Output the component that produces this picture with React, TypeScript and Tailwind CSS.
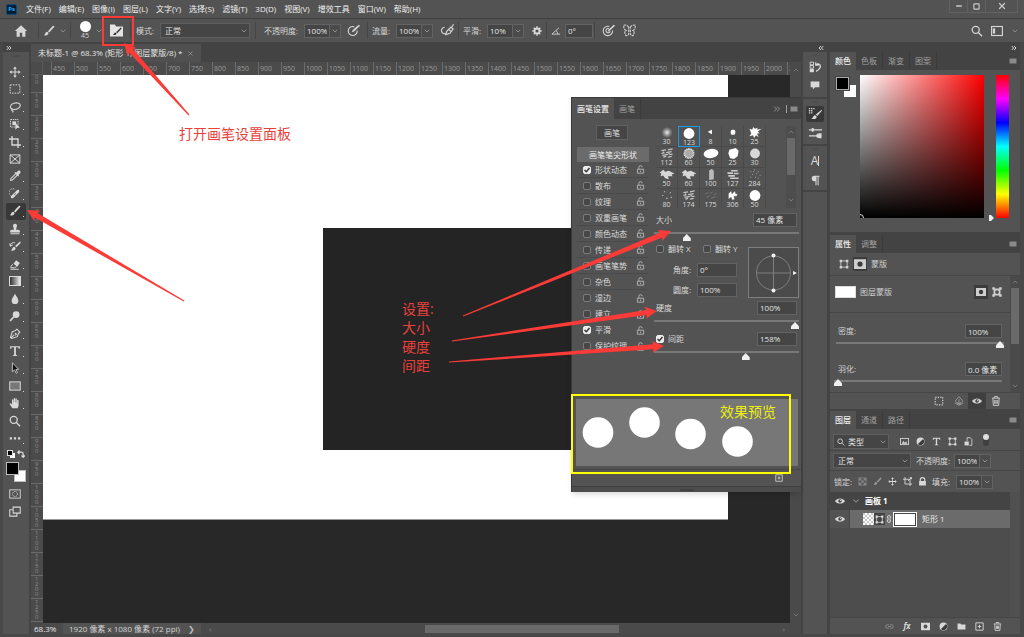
import React from 'react';
import { ChevronDown, ChevronUp, ChevronsLeft, ChevronsRight, Minus, Plus, Square, X } from 'lucide-react';

const RED = '#fb3b37';

// 16x16 drawings, painted in currentColor
const glyphs: Record<string, React.ReactNode> = {
  home: <path d="M8 1.500 1 8h2v6.500h3.600V10h2.800v4.500H13V8h2z" fill="currentColor" />,
  brush: <path d="M14.800 1.200c-.7-.6-1.500-.2-2.200.5L6.600 8.200l1.800 1.700 6-6.500c.6-.7 1-1.600.4-2.200zM5.700 9c-1.500 0-2.400 1-2.700 2.300-.2 1-.9 1.700-1.900 2 2.300 1.400 6.200.9 6.400-2.500z" fill="currentColor" />,
  move: <path d="M8 .5 5.500 3.500h1.800v3.800H3.500V5.500L.5 8l3 2.500V8.700h3.800v3.800H5.500L8 15.500l2.500-3H8.700V8.700h3.800v1.800l3-2.500-3-2.500v1.800H8.700V3.500h1.800z" fill="currentColor" />,
  marquee: <rect x="1.500" y="2.500" width="13" height="11" stroke="currentColor" strokeWidth="1.300" strokeDasharray="2.200 1.400" />,
  lasso: <path d="M4.500 11C.5 9.500 1 4.500 6.500 3s9 .5 8.500 3.500-5.500 5.500-9.500 4.500c-2-.5-2.500 1.500-1 2s1.500 1.500 0 2" stroke="currentColor" strokeWidth="1.400" />,
  objectSelect: (
    <>
      <rect x="2" y="2" width="10" height="10" stroke="currentColor" strokeWidth="1.200" strokeDasharray="2 1" />
      <rect x="4.500" y="4.500" width="5" height="5" fill="currentColor" />
      <path d="M8.500 6.500v9l2.300-2.200 3.700-.3z" fill="currentColor" />
    </>
  ),
  crop: <path d="M4 0v12h12M0 4h12v12" stroke="currentColor" strokeWidth="1.800" />,
  frame: <path d="M1.500 2.500h13v11h-13zM1.500 2.500l13 11M14.500 2.500l-13 11" stroke="currentColor" strokeWidth="1.300" />,
  eyedropper: <path d="m14.800 1.200c-1-1-2.300-.7-3 0L9.500 3.500l-1-1-1.200 1.200 1 1L2 11l-.8 3.800L5 14l6.300-6.300 1 1 1.200-1.200-1-1 2.300-2.300c.7-.7 1-2 0-3zM4.300 12.500l-1.500.5.500-1.500 5.900-5.900 1 1z" fill="currentColor" />,
  heal: (
    <>
      <path d="M2 10a5 5 0 0 1 6-8" stroke="currentColor" strokeWidth="1.200" strokeDasharray="1.500 1" />
      <path d="m10.200 3.200-7 7c-1 1-1 2.200-.2 3s2.200.8 3-.2l7-7c1-1 1-2.200.2-3s-2-.8-3 .2z" fill="currentColor" />
      <path d="m7 8 1.800 1.800M8.500 7l1 1" stroke="#444" strokeWidth="1" />
    </>
  ),
  stamp: <path d="M8 1a2.600 2.600 0 0 0-2.300 4L6.800 9H3.500a2 2 0 0 0-2 2v1.500h13V11a2 2 0 0 0-2-2H9.200l1.100-4A2.600 2.600 0 0 0 8 1zM2 13.500h12V15H2z" fill="currentColor" />,
  historyBrush: (
    <>
      <path d="M15 1.500 8 8l2 1.800L15.500 4zM7.200 9c-2 0-2.500 1.500-3 3-.2.800-1 1.500-2 1.700 2.500 1.200 6.300.8 6.700-2.900z" fill="currentColor" />
      <path d="M2 8a4 4 0 0 1 6-4M1 4.500l.8 3.800L5 6.500" stroke="currentColor" strokeWidth="1.300" />
    </>
  ),
  eraser: (
    <>
      <path d="m9.500 3 5 3.500-3.500 5-5-3.700z" fill="currentColor" />
      <path d="M5.300 8.500 2.500 11v2h5l2.800-1.800M2 15h11" stroke="currentColor" strokeWidth="1.300" />
    </>
  ),
  blur: <path d="M8 1C6.500 4 3.500 7 3.500 10.200a4.500 4.500 0 0 0 9 0C12.500 7 9.500 4 8 1z" fill="currentColor" />,
  dodge: (
    <>
      <circle cx="9.500" cy="6" r="4.500" fill="currentColor" />
      <path d="M6.500 9 1.500 14.500" stroke="currentColor" strokeWidth="2.200" />
    </>
  ),
  pen: <path d="M10.500 1.500 14.500 5.500 12.500 7.500 11 11.500 3.500 14 2 12.500 4.500 5l4-1.500zM2.500 13.500 7 9M8 7.500a1 1 0 1 1 0 1.500" stroke="currentColor" strokeWidth="1.400" />,
  type: <path d="M1.500 1.500h13V5H13c-.2-1.500-.7-2-2-2H9.200v9.500c0 .8.500 1 1.800 1.100v.9H5v-.9c1.300-.1 1.800-.3 1.800-1.100V3H5c-1.300 0-1.800.5-2 2H1.500z" fill="currentColor" />,
  pathSelect: <path d="M4.500 1v12l3-2.500L9.500 15l1.800-1-2-4 3.500-.3z" fill="#111" stroke="currentColor" strokeWidth="1.100" />,
  rect: <rect x="1" y="2.500" width="14" height="11" fill="#777" stroke="currentColor" strokeWidth="1.300" />,
  hand: <path d="M4.500 15 1 9.500c-.5-1 .6-1.800 1.500-1L4 10V4c0-1.200 1.700-1.200 1.800 0V7h.5V2.200c0-1.300 1.800-1.300 1.800 0V7h.5V2.700c0-1.200 1.800-1.200 1.800 0V7.500h.5V4.700c0-1.200 1.800-1.200 1.900 0v6c0 2-.8 3-1.300 4.300z" fill="currentColor" />,
  zoom: <path d="M11 6.500a4.700 4.700 0 1 1-9.400 0 4.700 4.700 0 0 1 9.400 0zM9.800 10l5 5" stroke="currentColor" strokeWidth="1.700" />,
  dots: <path d="M1 7h3v3H1zM6.500 7h3v3h-3zM12 7h3v3h-3z" fill="currentColor" />,
  quickMask: (
    <>
      <rect x="1" y="2.500" width="14" height="11" stroke="currentColor" strokeWidth="1.200" />
      <circle cx="8" cy="8" r="3.300" stroke="currentColor" strokeWidth="1.200" strokeDasharray="1.500 .8" />
    </>
  ),
  screenMode: <path d="M5.500 1.500h9.500v8H5.500zM5 5H1v8.500h9.500V10" stroke="currentColor" strokeWidth="1.400" />,
  brushPanel: (
    <>
      <path d="M0 .5h6L7.500 3H16v12.500H0z" fill="#e4e4e4" />
      <path d="M13.500 4 7.500 10l1.500 1.500 5.300-6zM6.700 10.500c-1.800 0-1.500 2-3 2.600 1.700.8 4.200.3 4.500-1.200z" fill="#3a3a3a" />
    </>
  ),
  pressure: (
    <>
      <path d="M9 3.500A5.500 5.500 0 1 0 12.500 8" stroke="currentColor" strokeWidth="1.400" />
      <path d="m6 10 1-2.500L14.500.8 16 2.300 8.700 9.200z" fill="currentColor" />
    </>
  ),
  airbrush: <path d="M4.500 4a4 4 0 1 0 2 7.500M6 13l1-4 5-5 3 2-4 5.500zM15.500.5 13 4M10 7l3 3" stroke="currentColor" strokeWidth="1.400" />,
  gear: (
    <>
      <circle cx="8" cy="8" r="4" stroke="currentColor" strokeWidth="3" />
      <path d="M8 .5v3M8 12.500v3M.5 8h3M12.500 8h3M2.700 2.700l2 2M11.300 11.300l2 2M2.700 13.300l2-2M11.300 4.700l2-2" stroke="currentColor" strokeWidth="2.200" />
    </>
  ),
  angle: <path d="M12.500 3 1.500 13h13M8 7.500c1.800 1.300 2.500 3 2.500 5.500" stroke="currentColor" strokeWidth="1.400" />,
  target: (
    <>
      <path d="M9 3A5.800 5.800 0 1 0 13 8M9 6a2.600 2.600 0 1 0 1 3" stroke="currentColor" strokeWidth="1.300" />
      <path d="m7 9.500.8-2L14.500.8 16 2.300 9.200 8.700z" fill="currentColor" />
    </>
  ),
  butterfly: <path d="M7 4C5.500 1.500 3 1 .8 1.500c0 3 .7 5.500 3 6.500-2 1-2 4.500.2 6.500 2 0 3-1.500 3-3zM9 4c1.500-2.500 4-3 6.200-2.500 0 3-.7 5.500-3 6.500 2 1 2 4.500-.2 6.500-2 0-3-1.500-3-3z" stroke="currentColor" strokeWidth="1.300" strokeDasharray="3 1" />,
  workspace: (
    <>
      <rect x=".8" y="2" width="14.400" height="12" stroke="currentColor" strokeWidth="1.500" />
      <path d="M2.500 4.500h3v7h-3z" fill="currentColor" />
    </>
  ),
  history: (
    <>
      <path d="M1.500 1.500H6V5H1.500zM1.500 6H6v3.500H1.500z" stroke="currentColor" strokeWidth="1.200" />
      <path d="M1 10.500h5.500v4.500H1z" fill="currentColor" />
      <path d="M9 1.500v4h4M9.500 5C13 2 17 6 14 10c-1 1.500-2.500 2.500-4.500 4" stroke="currentColor" strokeWidth="1.700" />
    </>
  ),
  comment: <path d="M1 2.500h14v9H8L4.500 15v-3.500H1z" fill="currentColor" />,
  brushSettings: (
    <>
      <path d="M1 1h1.500v1.500H1zM3.500 1H5v1.500H3.500zM6 1h1.500v1.500H6zM1 3.500h1.500V5H1zM3.500 3.500H5V5H3.500zM1 6h1.500v1.500H1zM3.500 6H5v1.500H3.500z" fill="currentColor" />
      <path d="M15.500 3 9 8.500l1.700 1.700L16 4zM8.300 9.500c-2.500 0-2 3-4.300 3.500 2 1.500 6 1 6-2z" fill="currentColor" />
    </>
  ),
  brushes: <path d="M0 4h3c0-1.500 2-2 3-1v1h10v1.500H6v1c-1 1-3 .5-3-1H0zM0 11.500h9C9 10 11 9 13 9l2.500 0v6H13c-2 0-4-.7-4-2H0z" fill="currentColor" />,
  paragraph: <path d="M6.500 1H14v1.500h-1.500V15H11V2.500H9.500V15H8V9H6.500a4 4 0 0 1 0-8z" fill="currentColor" />,
  transform: (
    <>
      <path d="M3 3h10v10H3z" stroke="currentColor" strokeWidth="1.400" />
      <path d="M1 1h4v4H1zM11 1h4v4h-4zM1 11h4v4H1zM11 11h4v4h-4z" fill="currentColor" />
    </>
  ),
  vectorMask: (
    <>
      <path fillRule="evenodd" d="M2.500 2.500h11v11h-11zM8 5a3 3 0 1 0 0 6 3 3 0 0 0 0-6z" fill="currentColor" />
      <path d="M.5.5h4v4h-4zM11.500.5h4v4h-4zM.5 11.500h4v4h-4zM11.500 11.500h4v4h-4z" fill="currentColor" />
    </>
  ),
  mask: <path fillRule="evenodd" d="M0 1.500h16v13H0zM8 4.500a3.500 3.500 0 1 0 0 7 3.500 3.500 0 0 0 0-7z" fill="currentColor" />,
  dotted: <rect x="2" y="2" width="12" height="12" stroke="currentColor" strokeWidth="2" strokeDasharray="2 2" />,
  apply: <path d="M8 1 2 8l6 6 6-6zM8 5v8M5.500 10 8 13l2.500-3M1 11l7 4 7-4" stroke="currentColor" strokeWidth="1.500" />,
  eye: (
    <>
      <path d="M0 8c3.500-5.500 12.500-5.500 16 0-3.500 5.500-12.500 5.500-16 0z" fill="currentColor" />
      <circle cx="8" cy="8" r="2.800" fill="#444" />
      <circle cx="8.800" cy="7.300" r="1" fill="currentColor" />
    </>
  ),
  trash: <path d="M1.500 3.500h13M5.500 3V1h5v2M3 4l.8 11h8.400L13 4M6 6.500v6M8 6.500v6M10 6.500v6" stroke="currentColor" strokeWidth="1.500" />,
  image: (
    <>
      <rect x="1" y="2.500" width="14" height="11" stroke="currentColor" strokeWidth="1.500" />
      <path d="m3 12 3-5 2.500 3L11 8l2 4z" fill="currentColor" />
    </>
  ),
  adjust: (
    <>
      <circle cx="8" cy="8" r="7" fill="currentColor" />
      <path d="M12.500 3.500a6.300 6.300 0 0 1-9 9z" fill="#3c3c3c" />
    </>
  ),
  smart: (
    <>
      <path d="M5.500 7V1.200H11L14 4.200v10.500H9.500" stroke="currentColor" strokeWidth="1.500" />
      <path d="M1 8h7.500v7H1z" fill="currentColor" />
    </>
  ),
  checker: (
    <>
      <rect x="1.500" y="1.500" width="13" height="13" stroke="currentColor" strokeWidth="1.300" />
      <path d="M2 2h4v4H2zM10 2h4v4h-4zM6 6h4v4H6zM2 10h4v4H2zM10 10h4v4h-4z" fill="currentColor" />
    </>
  ),
  artboard: <path d="M3.500 0v12.500H16M0 4h12.500v12M9 7l6-6M12 1h3v3" stroke="currentColor" strokeWidth="1.600" />,
  lockClosed: <path d="M3 7V5a5 5 0 0 1 10 0v2h1v8H2V7zM5 7h6V5a3 3 0 0 0-6 0z" fill="currentColor" />,
  lockOpen: <path d="M2.500 7.500h11v7h-11zM5 7V4.500a3 3 0 0 1 6-.5M8 10v2.500" stroke="currentColor" strokeWidth="1.500" />,
  link: <path d="M7 5H4a3 3 0 0 0 0 6h3M9 5h3a3 3 0 0 1 0 6H9M5 8h6" stroke="currentColor" strokeWidth="1.600" />,
  chain: <path d="M5 7V4a3 3 0 0 1 6 0v3M5 9v3a3 3 0 0 0 6 0V9M8 5v6" stroke="currentColor" strokeWidth="1.800" />,
  folder: <path d="M1 2.500h5l1.500 2H15v9H1z" fill="currentColor" />,
  newItem: <path d="M1.500 1.500h13v13h-13zM8 5v6M5 8h6" stroke="currentColor" strokeWidth="1.600" />,
  menu: <path d="M1 3h14v10H1z" fill="#8b8b8b" />,
  grip: <path d="M0 7h16v2H0z" fill="#474747" />,
};

const Icon: React.FC<{ name: string; className?: string }> = ({ name, className = 'size-3' }) => (
  <svg viewBox="0 0 16 16" fill="none" className={`shrink-0 ${className}`} aria-hidden="true">{glyphs[name]}</svg>
);

const IconButton: React.FC<{ icon: string; label: string; className?: string; size?: string }> = ({ icon, label, className = '', size }) => (
  <button aria-label={label} className={`flex items-center justify-center shrink-0 ${className}`}>
    <Icon name={icon} className={size} />
  </button>
);

const TextField: React.FC<{ id: string; value: string; label?: string; className?: string }> = ({ id, value, label, className = '' }) => (
  <input id={id} aria-label={label} defaultValue={value} className={`h-3.5 px-0.5 bg-[#454545] border border-[#626262] text-[#e4e4e4] outline-none min-w-0 shrink-0 ${className}`} />
);

const DropField: React.FC<{ id: string; label: string; value: string; labelClass?: string }> = ({ id, label, value, labelClass = 'w-5' }) => (
  <div className="flex items-center gap-1 shrink-0">
    <label htmlFor={id} className={`whitespace-nowrap ${labelClass}`}>{label}</label>
    <div className="flex">
      <TextField id={id} value={value} className="w-[26px]" />
      <button aria-label={label} className="w-[11px] h-3.5 border border-l-0 border-[#626262] bg-[#4b4b4b] flex items-center justify-center">
        <ChevronDown className="size-2 text-[#b0b0b0]" />
      </button>
    </div>
  </div>
);

const Select: React.FC<{ id: string; label: string; value: string; className?: string; pad?: string; children?: React.ReactNode }> = ({ id, label, value, className = '', pad = 'pl-1', children }) => (
  <div className={`relative flex items-center shrink-0 ${className}`}>
    <select id={id} aria-label={label} className={`appearance-none w-full h-[15px] bg-[#454545] border border-[#5f5f5f] text-[#e4e4e4] outline-none ${pad}`}>
      <option>{value}</option>
    </select>
    {children}
    <ChevronDown className="absolute right-0.5 size-2 text-[#b0b0b0] pointer-events-none" />
  </div>
);

const Slider: React.FC<{ label: string; value: number; low?: boolean; className?: string }> = ({ label, value, low, className = '' }) => (
  <input
    type="range"
    aria-label={label}
    defaultValue={value}
    className={`block appearance-none bg-transparent h-2 [&::-webkit-slider-runnable-track]:h-0.5 [&::-webkit-slider-runnable-track]:bg-[#787878] [&::-webkit-slider-thumb]:appearance-none [&::-webkit-slider-thumb]:w-2 [&::-webkit-slider-thumb]:h-[7px] [&::-webkit-slider-thumb]:bg-[#f0f0f0] [&::-webkit-slider-thumb]:[clip-path:polygon(50%_0,100%_60%,100%_100%,0_100%,0_60%)] ${low ? '[&::-webkit-slider-thumb]:mt-0.5' : '[&::-webkit-slider-thumb]:-mt-px'} ${className}`}
  />
);

const Check: React.FC<{ id: string; checked?: boolean }> = ({ id, checked }) => (
  <span className="relative size-2 shrink-0 flex">
    <input id={id} type="checkbox" defaultChecked={checked} className="peer appearance-none size-2 rounded-xs border border-[#7b7b7b] bg-[#474747] checked:bg-[#ececec] checked:border-[#ececec]" />
    <svg viewBox="0 0 8 8" className="absolute inset-0 size-2 hidden peer-checked:block pointer-events-none">
      <path d="M1.500 4 3.300 5.800 6.500 2" fill="none" stroke="#333" strokeWidth="1.400" />
    </svg>
  </span>
);

const TabBar: React.FC<{ tabs: string[]; h?: string }> = ({ tabs, h = 'h-[18px]' }) => (
  <div role="tablist" className={`flex bg-[#434343] shrink-0 ${h}`}>
    {tabs.map((t, i) => (
      <button key={t} role="tab" aria-selected={i === 0} className={i === 0 ? 'px-[5px] bg-[#535353] text-[#f0f0f0] font-medium' : 'px-[5px] text-[#a0a0a0] border-r border-[#3b3b3b]'}>{t}</button>
    ))}
    <span className="ml-auto mr-[3px] flex items-center"><Icon name="menu" className="size-2" /></span>
  </div>
);

const menus = ['文件(F)', '编辑(E)', '图像(I)', '图层(L)', '文字(Y)', '选择(S)', '滤镜(T)', '3D(D)', '视图(V)', '增效工具', '窗口(W)', '帮助(H)'];

const MenuBar: React.FC = () => (
  <header className="h-[19px] flex items-center pl-1.5 pr-1.5 border-b border-[#3f3f3f] text-[#f0f0f0]">
    <div className="size-[11px] rounded-xs bg-[#001e36] border border-[#0b4a75] text-[#31a8ff] text-[6px] font-bold leading-none flex items-center justify-center">Ps</div>
    <nav className="flex gap-2 ml-[9px]">
      {menus.map(m => <button key={m} className="whitespace-nowrap">{m}</button>)}
    </nav>
    <div className="ml-auto self-start flex h-[13px] border border-t-0 border-[#626262] text-[#c8c8c8]">
      <button aria-label="最小化" className="w-[18px] flex items-center justify-center border-r border-[#626262]"><Minus className="size-2" strokeWidth={4} /></button>
      <button aria-label="最大化" className="w-[18px] flex items-center justify-center border-r border-[#626262]"><Square className="size-[7px]" strokeWidth={4} /></button>
      <button aria-label="关闭" className="w-[31px] flex items-center justify-center"><X className="size-2.5" strokeWidth={3} /></button>
    </div>
  </header>
);

const group = 'h-[17px] flex items-center shrink-0 border-r border-[#454545]';

const OptionsBar: React.FC = () => (
  <div className="h-6 flex items-center px-[3px] border-b border-[#434343] text-[#d6d6d6]">
    <div className={`${group} w-9 justify-center`}><IconButton icon="home" label="主页" size="size-3.5" /></div>
    <div className={`${group} w-8 justify-center gap-1`}>
      <IconButton icon="brush" label="画笔工具" />
      <ChevronDown className="size-2 text-[#a8a8a8]" />
    </div>
    <div className={`${group} w-[60px] pl-2`}>
      <div className="w-3 flex flex-col items-center">
        <span className="size-[11px] rounded-full bg-white" />
        <span className="text-[7px] leading-2">45</span>
      </div>
      <ChevronDown className="size-2 ml-1 text-[#a8a8a8]" />
      <IconButton icon="brushPanel" label="画笔设置" className="ml-[7px]" size="size-[13px]" />
    </div>
    <div className={`${group} w-[125px] pl-[5px] gap-1`}>
      <label htmlFor="mode" className="w-5 whitespace-nowrap">模式:</label>
      <Select id="mode" label="模式" value="正常" className="w-[90px]" />
    </div>
    <div className={`${group} w-28 pl-2 gap-1.5`}>
      <DropField id="opacity" label="不透明度:" value="100%" labelClass="w-9" />
      <IconButton icon="pressure" label="不透明度压力" size="size-[13px]" />
    </div>
    <div className={`${group} w-[91px] pl-1 gap-2`}>
      <DropField id="flow" label="流量:" value="100%" />
      <IconButton icon="airbrush" label="喷枪" size="size-[13px]" />
    </div>
    <div className={`${group} w-[88px] pl-1 gap-2`}>
      <DropField id="smooth" label="平滑:" value="10%" />
      <IconButton icon="gear" label="平滑选项" size="size-2.5" />
    </div>
    <div className={`${group} w-12 pl-1 gap-1`}>
      <label htmlFor="angle"><Icon name="angle" className="size-2.5" /></label>
      <TextField id="angle" label="角度" value="0°" className="w-7" />
    </div>
    <IconButton icon="target" label="大小压力" className="ml-[7px]" size="size-[13px]" />
    <IconButton icon="butterfly" label="对称" className="ml-2" size="size-[13px]" />
    <div className="ml-auto flex items-center gap-2 mr-0.5">
      <IconButton icon="zoom" label="搜索" size="size-3" />
      <IconButton icon="workspace" label="工作区" />
      <ChevronDown className="size-2 text-[#a8a8a8]" />
    </div>
  </div>
);

const tools = [
  ['move', '移动'], ['marquee', '选框'], ['lasso', '套索'], ['objectSelect', '对象选择'], ['crop', '裁剪'], ['frame', '图框'],
  ['eyedropper', '吸管'], ['heal', '修复画笔'], ['brush', '画笔'], ['stamp', '图章'], ['historyBrush', '历史记录画笔'], ['eraser', '橡皮擦'],
  ['gradient', '渐变'], ['blur', '模糊'], ['dodge', '减淡'], ['pen', '钢笔'], ['type', '文字'], ['pathSelect', '路径选择'],
  ['rect', '矩形'], ['hand', '抓手'], ['zoom', '缩放'], ['dots', '更多'],
];

const Toolbar: React.FC = () => (
  <aside className="w-[26px] shrink-0 flex flex-col bg-[#535353] text-[#d9d9d9]">
    <div className="h-[9px] bg-[#434343] flex items-center"><ChevronsRight className="size-2 ml-0.5" strokeWidth={3} /></div>
    <div className="h-[11px] flex justify-center"><Icon name="grip" className="w-4 h-2" /></div>
    <div className="grid auto-rows-fr h-96 px-[3px]">
      {tools.map(([icon, label]) => (
        <button key={icon} aria-label={label} className={`relative flex items-center pl-[3px] ${icon === 'brush' ? 'bg-[#383838] rounded-xs' : ''}`}>
          {icon === 'gradient'
            ? <span className="w-3 h-2.5 border border-[#d9d9d9] bg-linear-to-r from-[#333] to-[#eee]" />
            : <Icon name={icon} className="size-3" />}
          {icon !== 'frame' && icon !== 'zoom' && <span className="absolute right-0.5 bottom-[3px] size-px bg-[#d9d9d9]" />}
        </button>
      ))}
    </div>
    <div className="flex items-center justify-between px-1 h-3 mt-px">
      <svg viewBox="0 0 8 8" className="size-2"><rect x="3" y="3" width="5" height="5" fill="#fff" /><rect x=".5" y=".5" width="5" height="5" fill="#000" stroke="#ddd" /></svg>
      <svg viewBox="0 0 8 8" className="size-2" fill="none" stroke="#ddd" strokeWidth="1.200"><path d="M2.500.5.8 2.200 2.500 4M1 2.200h3.200q2 0 2 2V7M4.500 5.500 6.200 7.300 7.800 5.500" /></svg>
    </div>
    <div className="grid ml-[3px] mt-0.5 size-5">
      <button aria-label="背景色" className="col-start-1 row-start-1 size-3 bg-white border border-[#bbb] justify-self-end self-end" />
      <button aria-label="前景色" className="col-start-1 row-start-1 size-[13px] bg-black border border-[#bbb]" />
    </div>
    <div className="flex flex-col gap-1.5 items-start pl-1.5 mt-1.5">
      <IconButton icon="quickMask" label="快速蒙版" />
      <IconButton icon="screenMode" label="屏幕模式" />
    </div>
  </aside>
);

const hTicks = Array.from({ length: 33 }, (_, i) => 450 + i * 50);
const vTicks = Array.from({ length: 23 }, (_, i) => 150 + i * 50);

const DocumentArea: React.FC = () => (
  <main className="flex-1 min-w-0 flex flex-col ml-0.5">
    <div className="h-[19px] bg-[#434343] flex pt-px shrink-0">
      <button className="flex items-center bg-[#505050] text-[#e2e2e2] pl-[7px] pr-[7px] gap-1 whitespace-nowrap">
        未标题-1 @ 68.3% (矩形 1, 图层蒙版/8) * <X className="size-[7px] text-[#aaa]" />
      </button>
    </div>
    <div className="flex-1 min-h-0 flex">
      <div className="flex-1 min-w-0 flex flex-col">
        <div className="h-[13px] shrink-0 flex bg-[#4b4b4b] text-[#999] text-[7px] overflow-hidden">
          <div className="w-3 shrink-0 border-r border-b border-[#5a5a5a]" />
          <div className="w-2 shrink-0" />
          {hTicks.map(n => (
            <span key={n} className="w-[23px] shrink-0 border-l border-[#6a6a6a] pl-px leading-[13px]">{n}</span>
          ))}
        </div>
        <div className="flex-1 min-h-0 flex">
          <div className="w-3 shrink-0 bg-[#4b4b4b] text-[#8c8c8c] text-[6px] leading-[5px] overflow-hidden">
            <div className="h-[17px]"><p className="w-[5px] ml-1 break-all">00</p></div>
            {vTicks.map(n => (
              <div key={n} className="h-[23px] border-t border-[#6a6a6a] pt-px">
                <p className="w-[5px] ml-1 break-all">{n}</p>
              </div>
            ))}
            <div className="border-t border-[#6a6a6a]" />
          </div>
          <div className="flex-1 min-w-0 bg-[#282828] overflow-hidden">
            <div className="w-[685px] h-[445px] bg-white border-b border-[#9a9a9a] pt-[153px] pl-[280px]">
              <div className="w-[262px] h-[222px] bg-[#242424]" />
            </div>
          </div>
        </div>
      </div>
      <div className="w-[11px] shrink-0 bg-[#4a4a4a] flex flex-col items-center justify-between py-1 text-[#8a8a8a]">
        <ChevronUp className="size-2" />
        <ChevronDown className="size-2" />
      </div>
    </div>
    <footer className="h-[11px] shrink-0 flex items-center bg-[#4a4a4a] text-[#d2d2d2] leading-none">
      <span className="w-8 pl-[3px] text-[#e8e8e8]">68.3%</span>
      <span className="self-stretch flex items-center bg-[#535353] px-1.5 gap-2 whitespace-nowrap">
        1920 像素 x 1080 像素 (72 ppi)
        <span className="text-[#bbb]">❯</span>
      </span>
      <span className="text-[#8a8a8a] pl-2">‹</span>
      <div className="flex-1 pl-[214px] pr-[164px]"><div className="h-2 bg-[#6a6a6a]" /></div>
      <span className="text-[#8a8a8a] pr-4">›</span>
    </footer>
  </main>
);

const strokeRows = [
  ['形状动态', true], ['散布', false], ['纹理', false], ['双重画笔', false], ['颜色动态', false], ['传递', false],
  ['画笔笔势', false], ['杂色', false], ['湿边', false], ['建立', false], ['平滑', true], ['保护纹理', false],
] as [string, boolean][];

const tips = [
  ['30', 'soft'], ['123', 'round'], ['8', 'tiny'], ['10', 'dot'], ['25', 'splat'],
  ['112', 'scratch'], ['60', 'sponge'], ['50', 'oval'], ['25', 'blob'], ['30', 'rough'],
  ['50', 'leaf'], ['60', 'leaf'], ['100', 'bar'], ['127', 'dash'], ['284', 'spray'],
  ['80', 'sparse'], ['174', 'scratch'], ['175', 'faint'], ['306', 'flakes'], ['50', 'round'],
];

const tipShapes: Record<string, React.ReactNode> = {
  soft: <circle cx="9" cy="7" r="6" fill="url(#soft)" />,
  round: <circle cx="9" cy="7" r="5.800" />,
  tiny: <path d="m6 6 4-2v5L6.500 7z" />,
  dot: <rect x="6.500" y="4" width="5" height="5.500" rx="2" />,
  splat: <path d="m3 3 3 1 1-3 2 2 3-1-1 2 5-1-4 3 2 2-3 0 2 4-3-2-2 3-1-3-4 1 2-3z" />,
  scratch: <path d="M3 4l5-1M10 3l5-1M3 7l3-1M8 6l6-1M4 9l6-1M12 8l3 0M5 11l3-1M10 11l4-1M5 5l1 2M12 5l-1 3" stroke="#c4c4c4" strokeWidth="1.400" />,
  sponge: <circle cx="9" cy="7" r="5" stroke="#ddd" strokeWidth="1.800" strokeDasharray="1.200 .6" fill="#aaa" />,
  oval: <ellipse cx="9" cy="7" rx="8" ry="5" transform="rotate(-8 9 7)" />,
  blob: <path d="m5 3 7-2 3 3-1 6-4 3-4-1-2-5z" />,
  rough: <circle cx="9" cy="7" r="5.300" fill="#d8d8d8" />,
  leaf: <path d="m1 5 4-3 2 2 4-1 6 3-3 1 1 2-5 0 1 3-4-1-2-3-3 1 1-3z" fill="#d6d6d6" />,
  bar: <path d="M7 2.500 10 1l2 2v9l-5 1z" fill="#bbb" />,
  dash: <path d="M7 3h7M3 5.500h6M10 6h5M4 8.500h7M6 11h9" stroke="#ccc" strokeWidth="1.700" />,
  spray: <path d="M4 4h1M8 2h1M12 4h1M6 7h1M10 6h1M14 8h1M4 10h1M9 10h1M12 11h1M7 4h1" stroke="#aaa" strokeWidth="1" />,
  sparse: <path d="M4 7h1M8 10h1.500M12 4h1M13 9h1M6 3h1" stroke="#ddd" strokeWidth="1.200" />,
  faint: <path d="M3 5l3-1M8 5l3-2M12 6l3-1M4 9l4-2M9 10l5-2" stroke="#777" strokeWidth="1" />,
  flakes: <path d="m4 5 3-3 1 3 3-3 1 3 2 0-1 3-3 0 1 3-3 1-1-3-3 2 0-3z" stroke="#535353" strokeWidth=".6" />,
};

const BrushPanel: React.FC = () => (
  <section className="absolute left-[571px] top-[97px] w-[230px] bg-[#535353] border-l border-t border-[#3a3a3a] shadow-md text-[#dadada]">
    <div className="relative">
      <TabBar tabs={['画笔设置', '画笔']} h="h-[21px]" />
      <div className="absolute right-3.5 top-1.5 flex items-center text-[#a0a0a0] gap-1">
        <ChevronsRight className="size-2.5" /><span className="w-px h-2 bg-[#a0a0a0]" />
      </div>
    </div>
    <div className="flex pl-[5px] pr-1">
      <div className="w-[72px] shrink-0 pt-1.5">
        <button className="block ml-[19px] w-8 h-[15px] bg-[#454545] border border-[#606060]">画笔</button>
        <ul className="mt-[7px] h-[205px] overflow-hidden">
          <li className="h-[15px] bg-[#6b6b6b] flex items-center justify-center text-[#eee]">画笔笔尖形状</li>
          {strokeRows.map(([name, on], i) => (
            <li key={name} className={`h-4 flex items-center gap-1 pl-1.5 pr-1 ${i < 8 ? 'border-b border-[#4a4a4a]' : ''}`}>
              <Check id={`row-${i}`} checked={on} />
              <label htmlFor={`row-${i}`} className="flex-1 whitespace-nowrap">{name}</label>
              <Icon name="lockOpen" className="size-[9px] text-[#c0c0c0]" />
            </li>
          ))}
        </ul>
      </div>
      <div className="flex-1 min-w-0 ml-[7px] pt-[7px]">
        <div className="flex h-[82px] overflow-hidden">
          <div className="grid grid-cols-5 w-[110px] auto-rows-[21px]">
            {tips.map(([n, shape], i) => (
              <button key={i} className={`flex flex-col items-center border text-[7px] leading-[6px] ${i === 1 ? 'border-[#1f9be6]' : 'border-[#4a4a4a] border-t-0 border-l-0'}`}>
                <svg viewBox="0 0 18 14" className="w-[18px] h-[13px] shrink-0" fill="#fff">
                  {shape === 'soft' && (
                    <radialGradient id="soft"><stop offset="0" stopColor="#eee" /><stop offset="1" stopColor="#ccc" stopOpacity="0" /></radialGradient>
                  )}
                  {tipShapes[shape]}
                </svg>
                {n}
              </button>
            ))}
          </div>
          <div className="ml-auto mr-px w-2.5 bg-[#4d4d4d] flex flex-col items-center text-[#909090]">
            <ChevronUp className="size-2 my-0.5" />
            <div className="w-2 h-[37px] bg-[#6a6a6a]" />
            <ChevronDown className="size-2 mt-auto mb-1" />
          </div>
        </div>
        <div className="flex items-center justify-between mt-[5px] h-[13px]">
          <label htmlFor="size">大小</label>
          <TextField id="size" value="45 像素" className="w-11" />
        </div>
        <Slider label="大小" value={21} low className="w-[145px] -ml-0.5 mt-[3px]" />
        <div className="flex justify-between mt-[7px]">
          <div className="flex flex-col">
            <div className="flex items-center h-2.5 gap-1">
              <Check id="flip-x" /><label htmlFor="flip-x" className="w-[31px] whitespace-nowrap">翻转 X</label>
              <Check id="flip-y" /><label htmlFor="flip-y" className="whitespace-nowrap">翻转 Y</label>
            </div>
            <div className="flex items-center gap-1 pl-[17px] mt-[9px] h-[13px]">
              <label htmlFor="tip-angle" className="w-5 whitespace-nowrap">角度:</label>
              <TextField id="tip-angle" value="0°" className="w-10" />
            </div>
            <div className="flex items-center gap-1 pl-[17px] mt-[7px] h-[13px]">
              <label htmlFor="roundness" className="w-5 whitespace-nowrap">圆度:</label>
              <TextField id="roundness" value="100%" className="w-10" />
            </div>
          </div>
          <svg viewBox="0 0 51 51" className="size-[51px] mt-[3px] -mr-0.5" fill="none" stroke="#7e7e7e">
            <rect x=".5" y=".5" width="50" height="50" fill="#4b4b4b" />
            <circle cx="25.500" cy="26" r="17" />
            <path d="M25.500 9v34M8.500 26h34" />
            <circle cx="25.500" cy="8.500" r="2" fill="#f0f0f0" stroke="none" />
            <circle cx="25.500" cy="43.500" r="2" fill="#f0f0f0" stroke="none" />
            <path d="m45 24 4 2-4 2z" fill="#f0f0f0" stroke="none" />
          </svg>
        </div>
        <div className="flex items-center justify-between mt-[3px] h-[13px]">
          <label htmlFor="hardness">硬度</label>
          <TextField id="hardness" value="100%" className="w-10" />
        </div>
        <Slider label="硬度" value={100} low className="w-[145px] -ml-0.5 mt-[3px]" />
        <div className="flex items-center mt-[7px] h-[13px] gap-1">
          <Check id="spacing-on" checked />
          <label htmlFor="spacing-on" className="flex-1">间距</label>
          <TextField id="spacing" label="间距" value="158%" className="w-10" />
        </div>
        <Slider label="间距" value={64} low className="w-[145px] -ml-0.5 mt-[3px]" />
      </div>
    </div>
    <svg viewBox="0 0 222 67" className="block w-[222px] h-[67px] ml-1 mt-[43px] bg-[#777]" fill="#fff">
      <circle cx="22" cy="33.500" r="15.300" />
      <circle cx="68.500" cy="23.500" r="15.300" />
      <circle cx="114.500" cy="35" r="15.300" />
      <circle cx="161.500" cy="42.500" r="15.300" />
    </svg>
    <div className="h-[17px] mt-[3px] border-t border-[#464646] flex items-center justify-end pr-[18px]">
      <IconButton icon="newItem" label="新建画笔" size="size-2" />
    </div>
    <div className="h-1.5 border-t border-[#404040] bg-[#4c4c4c] flex justify-center items-center"><span className="w-3.5 h-0.5 bg-[#424242]" /></div>
  </section>
);

const StripGroup: React.FC<{ children: React.ReactNode; className?: string }> = ({ children, className = '' }) => (
  <div className={`flex flex-col items-center border-b-2 border-[#444] ${className}`}>
    <Icon name="grip" className="w-4 h-1.5" />
    {children}
  </div>
);

const IconStrip: React.FC = () => (
  <aside className="w-6 shrink-0 ml-0.5 bg-[#535353] text-[#d9d9d9] flex flex-col">
    <div className="h-[9px] bg-[#434343] flex items-center justify-end"><ChevronsLeft className="size-2 mr-0.5" strokeWidth={3} /></div>
    <StripGroup className="h-[47px]">
      <IconButton icon="history" label="历史记录" className="h-[18px]" />
      <IconButton icon="comment" label="注释" className="h-[18px]" size="size-2.5" />
    </StripGroup>
    <StripGroup className="h-[47px]">
      <IconButton icon="brushSettings" label="画笔设置" className="w-[18px] h-4 bg-[#383838] rounded-xs mt-px" size="size-3.5" />
      <IconButton icon="brushes" label="画笔" className="h-5" size="size-[13px]" />
    </StripGroup>
    <StripGroup className="h-[46px]">
      <button aria-label="字符" className="h-[18px] flex items-center text-[12px] leading-none">A<span className="w-px h-2.5 bg-[#d9d9d9]" /></button>
      <IconButton icon="paragraph" label="段落" className="h-5" size="size-[11px]" />
    </StripGroup>
  </aside>
);

const ColorPanel: React.FC = () => (
  <section className="bg-[#535353]">
    <TabBar tabs={['颜色', '色板', '渐变', '图案']} />
    <div className="flex pt-[5px] pb-3.5 pl-1.5 pr-[11px]">
      <div className="grid size-5 mt-0.5 mr-1 shrink-0">
        <span className="col-start-1 row-start-1 size-3 bg-white justify-self-end self-end" />
        <span className="col-start-1 row-start-1 size-[13px] bg-black border border-[#aaa] outline outline-[#444]" />
      </div>
      <div className="flex-1 h-[143px] bg-[linear-gradient(to_top,#000,transparent),linear-gradient(to_right,#fff,#f00)] flex items-end overflow-hidden">
        <span className="size-2 rounded-full border border-[#ddd] -ml-1 -mb-1" />
      </div>
      <svg viewBox="0 0 5 6" className="w-[5px] h-1.5 self-end ml-[5px] -mb-[3px]"><path d="M0 0h2l3 3-3 3H0z" fill="#eee" /></svg>
      <div className="w-[13px] ml-0.5 h-[143px] bg-[linear-gradient(to_bottom,#f00,#f0f,#00f,#0ff,#0f0,#ff0,#f00)]" />
    </div>
  </section>
);

const PropertiesPanel: React.FC = () => (
  <section className="bg-[#535353] mt-[3px] text-[#d0d0d0]">
    <TabBar tabs={['属性', '调整']} />
    <div className="h-[23px] flex items-center pl-[9px] gap-1 border-b border-[#464646]">
      <Icon name="transform" className="size-2.5" />
      <span className="w-3.5 h-3.5 bg-[#3c3c3c] flex items-center justify-center"><Icon name="mask" /></span>
      <span>蒙版</span>
    </div>
    <div className="flex h-[116px]">
      <div className="flex-1 min-w-0">
        <div className="h-[37px] flex items-center border-b border-[#464646] pl-[5px] pr-2 pb-1">
          <span className="w-[21px] h-3 bg-white border border-[#ddd]" />
          <span className="ml-1">图层蒙版</span>
          <span className="ml-auto w-3.5 h-3.5 bg-[#3c3c3c] flex items-center justify-center"><Icon name="mask" className="size-2.5" /></span>
          <IconButton icon="vectorMask" label="矢量蒙版" className="ml-1" size="size-2.5" />
        </div>
        <div className="px-2 pt-[11px]">
          <div className="flex justify-between items-center h-3.5">
            <label htmlFor="density">密度:</label>
            <TextField id="density" value="100%" className="w-[37px]" />
          </div>
          <Slider label="密度" value={100} className="w-[168px] -ml-0.5 mt-px" />
          <div className="flex justify-between items-center h-3.5 mt-[15px]">
            <label htmlFor="feather">羽化:</label>
            <TextField id="feather" value="0.0 像素" className="w-[37px]" />
          </div>
          <Slider label="羽化" value={0} className="w-[168px] -ml-1 mt-px" />
        </div>
      </div>
      <div className="w-2.5 bg-[#4a4a4a] flex flex-col items-center text-[#909090]">
        <ChevronUp className="size-2 my-0.5" />
        <div className="w-2 h-14 bg-[#6a6a6a]" />
        <ChevronDown className="size-2 mt-auto mb-0.5" />
      </div>
    </div>
    <div className="h-[17px] border-t border-[#464646] flex items-center justify-end pr-3.5">
      <IconButton icon="dotted" label="载入选区" className="w-5" size="size-2.5" />
      <IconButton icon="apply" label="应用蒙版" className="w-[19px] text-[#999]" size="size-2.5" />
      <IconButton icon="eye" label="停用蒙版" className="w-[18px] h-4 bg-[#3f3f3f]" size="size-2.5" />
      <IconButton icon="trash" label="删除蒙版" className="w-5" size="size-2.5" />
    </div>
  </section>
);

const filters = ['image', 'adjust', 'type', 'transform', 'smart'];
const locks = [['checker', 'text-[#888]'], ['brush', 'text-[#999]'], ['move', ''], ['artboard', ''], ['lockClosed', '']];
const layerActions = [['link', '链接图层'], ['fx', '样式'], ['mask', '添加蒙版'], ['adjust', '调整图层'], ['folder', '新建组'], ['newItem', '新建图层'], ['trash', '删除图层']];

const LayersPanel: React.FC = () => (
  <section className="bg-[#535353] mt-0.5 flex-1 flex flex-col text-[#d8d8d8]">
    <TabBar tabs={['图层', '通道', '路径']} />
    <div className="h-[22px] flex items-center pl-[3px] border-b border-[#464646] pt-1">
      <Select id="filter" label="类型" value="类型" className="w-14" pad="pl-3.5">
        <Icon name="zoom" className="size-2 absolute left-1 pointer-events-none" />
      </Select>
      <div className="flex gap-[7px] ml-[11px]">
        {filters.map(f => <IconButton key={f} icon={f} label={f} size="size-[9px]" />)}
      </div>
      <span className="ml-2.5 w-1.5 h-3 rounded-full bg-[#3f3f3f] -mt-1"><span className="block size-1.5 rounded-full bg-[#e0e0e0]" /></span>
    </div>
    <div className="h-5 flex items-center pl-[3px] gap-[5px] border-b border-[#464646]">
      <Select id="blend" label="混合模式" value="正常" className="w-[78px]" />
      <DropField id="layer-opacity" label="不透明度:" value="100%" labelClass="w-[34px]" />
    </div>
    <div className="h-[21px] flex items-center pl-1">
      <span className="w-6 whitespace-nowrap">锁定:</span>
      <div className="flex gap-1.5 mr-[5px]">
        {locks.map(([l, c]) => <IconButton key={l} icon={l} label={l} className={c} size="size-[9px]" />)}
      </div>
      <DropField id="fill" label="填充:" value="100%" />
    </div>
    <div className="flex-1 flex">
      <div className="flex-1 bg-[#4d4d4d]">
        <div className="h-[18px] bg-[#444] flex items-center">
          <IconButton icon="eye" label="显示画板" className="w-5" size="size-2.5" />
          <ChevronDown className="size-2.5 ml-px text-[#b0b0b0]" />
          <span className="ml-1 font-bold text-white">画板 1</span>
        </div>
        <div className="h-[18px] bg-[#535353] flex">
          <IconButton icon="eye" label="显示图层" className="w-5 border-r border-[#464646]" size="size-2.5" />
          <div className="flex-1 bg-[#6b6b6b] flex items-center pl-[13px]">
            <span className="w-[22px] h-3 flex justify-end bg-[repeating-conic-gradient(#fff_0_25%,#c4c4c4_0_50%)] bg-[length:4px_4px]">
              <span className="w-[11px] bg-[#444] flex items-center justify-center"><Icon name="transform" className="size-[9px]" /></span>
            </span>
            <Icon name="chain" className="w-2 h-2.5" />
            <span className="w-6 h-[15px] border border-white bg-[#444] p-px flex"><span className="flex-1 bg-white" /></span>
            <span className="ml-[5px] text-[#e6e6e6]">矩形 1</span>
          </div>
        </div>
      </div>
      <div className="w-2.5 bg-[#505050]" />
    </div>
    <div className="h-[17px] flex items-center justify-end pr-3.5 border-t border-[#464646]">
      {layerActions.map(([icon, label]) => (icon === 'fx'
        ? <button key={icon} aria-label={label} className="w-[18px] italic font-bold">fx</button>
        : <IconButton key={icon} icon={icon} label={label} className={icon === 'link' ? 'w-[18px] text-[#8c8c8c]' : 'w-[18px]'} size="size-[9px]" />
      ))}
    </div>
  </section>
);

// Tapered arrow: a pointed shaft that widens into the head
const Arrow: React.FC<{ from: [number, number]; to: [number, number] }> = ({ from, to }) => {
  const [x1, y1] = from;
  const [x2, y2] = to;
  const len = Math.hypot(x2 - x1, y2 - y1);
  const ux = (x2 - x1) / len;
  const uy = (y2 - y1) / len;
  const at = (back: number, side: number) => `${x2 - ux * back - uy * side},${y2 - uy * back + ux * side}`;
  return <polygon fill={RED} points={[at(0, 0), at(12, 6), at(10.5, 2.6), at(len, 0.6), at(len, -0.6), at(10.5, -2.6), at(12, -6)].join(' ')} />;
};

const Annotations: React.FC = () => (
  <div className="absolute inset-0 overflow-hidden pointer-events-none text-sm leading-[19px] text-[#e8413c]">
    <svg className="absolute inset-0 w-full h-full">
      <rect x="103" y="17" width="30" height="28" fill="none" stroke={RED} strokeWidth="2" />
      <Arrow from={[189, 115]} to={[124, 43]} />
      <Arrow from={[184, 301]} to={[27, 210]} />
      <Arrow from={[463, 316]} to={[671, 231]} />
      <Arrow from={[452, 341]} to={[657, 311]} />
      <Arrow from={[449, 362]} to={[664, 346]} />
    </svg>
    <p className="absolute left-[179px] top-[124px]">打开画笔设置面板</p>
    <div className="absolute left-[402px] top-[299px]">
      <p>设置:</p>
      <p>大小</p>
      <p>硬度</p>
      <p>间距</p>
    </div>
    <div className="absolute left-[571px] top-[394px] w-[220px] h-20 border-2 border-[#ffff00] text-[#eeee10]">
      <p className="pl-[147px] pt-1.5">效果预览</p>
    </div>
  </div>
);

const App: React.FC = () => (
  <div className="relative h-screen overflow-hidden flex flex-col bg-[#535353] text-[8px] leading-[12px] font-['Open_Sans','Noto_Sans_CJK_SC',sans-serif]">
    <MenuBar />
    <OptionsBar />
    <div className="flex-1 min-h-0 flex bg-[#434343] border-l-[3px] border-r-4 border-b-[3px] border-[#484848]">
      <Toolbar />
      <DocumentArea />
      <IconStrip />
      <aside className="w-[190px] shrink-0 ml-[3px] flex flex-col">
        <div className="h-[9px] flex items-center justify-end text-[#d9d9d9] shrink-0"><ChevronsRight className="size-2 mr-0.5" strokeWidth={3} /></div>
        <ColorPanel />
        <PropertiesPanel />
        <LayersPanel />
      </aside>
    </div>
    <BrushPanel />
    <Annotations />
  </div>
);

export default App;
